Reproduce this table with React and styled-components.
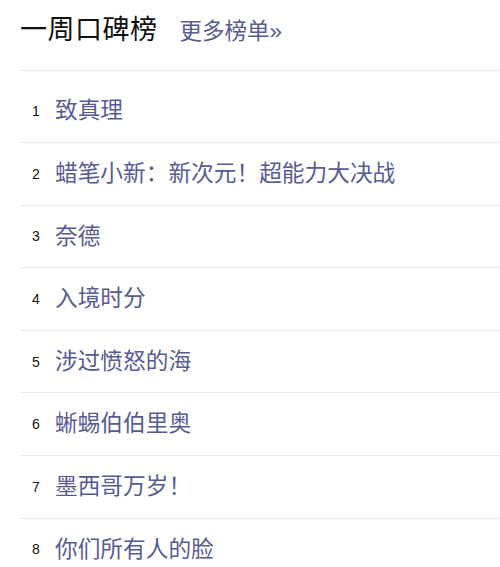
import React from 'react';
import styled, { createGlobalStyle } from 'styled-components';

const GlobalStyle = createGlobalStyle`
  body {
    margin: 0;
    background: #fff;
    font-family: "Liberation Sans", "Noto Sans CJK SC", sans-serif;
  }
`;

const movies = [
  '致真理',
  '蜡笔小新：新次元！超能力大决战',
  '奈德',
  '入境时分',
  '涉过愤怒的海',
  '蜥蜴伯伯里奥',
  '墨西哥万岁！',
  '你们所有人的脸',
];

const Board = () => {
  return (
    <Wrapper>
      <GlobalStyle />
      <Header>
        <Title>一周口碑榜</Title>
        <More href="#">更多榜单»</More>
      </Header>
      <List>
        {movies.map((name, i) => (
          <Row key={name} first={i === 0}>
            <Rank>{i + 1}</Rank>
            <Name>{name}</Name>
          </Row>
        ))}
      </List>
    </Wrapper>
  );
};

const Wrapper = styled.div`
  padding-left: 20px;
  height: 567px;
  overflow: hidden;
`;

const Header = styled.div`
  display: flex;
  align-items: baseline;
  height: 71px;
  box-sizing: border-box;
  padding-top: 8px;
  border-bottom: 1px solid #ebebeb;
`;

const Title = styled.h2`
  margin: 0;
  font-size: 27px;
  font-weight: normal;
  color: #111;
  letter-spacing: 0.5px;
`;

const More = styled.a`
  margin-left: 22px;
  font-size: 22.5px;
  color: #575b93;
  text-decoration: none;
`;

const List = styled.ul`
  margin: 0;
  padding: 0;
  list-style: none;
`;

const Row = styled.li`
  display: flex;
  align-items: center;
  height: ${p => (p.first ? '72px' : '62.6px')};
  padding-top: ${p => (p.first ? '9px' : '0')};
  box-sizing: border-box;
  border-bottom: 1px solid #ebebeb;
  padding-left: 12px;
`;

const Rank = styled.span`
  width: 23px;
  font-size: 14px;
  color: #111;
`;

const Name = styled.span`
  font-size: 22.7px;
  line-height: 1.3;
  color: #575b93;
`;

export default Board;
